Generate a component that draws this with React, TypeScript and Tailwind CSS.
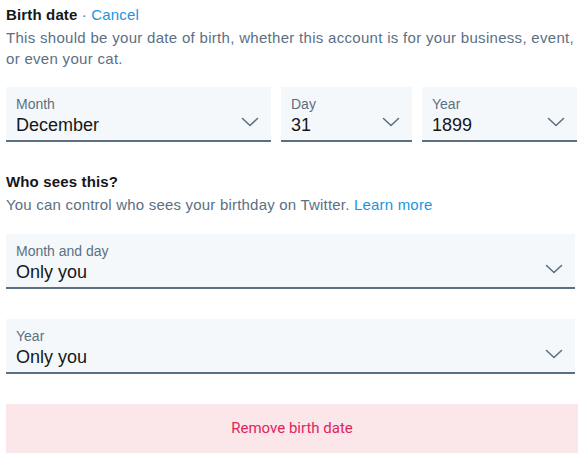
import { ReactNode } from 'react';

function Chevron() {
  return (
    <svg width="18" height="10" viewBox="0 0 18 10" fill="none" className="shrink-0">
      <path d="M1.5 1.5 L9 8.5 L16.5 1.5" stroke="#5b7083" strokeWidth="1.6" strokeLinecap="round" strokeLinejoin="round" />
    </svg>
  );
}

function SelectField({ label, value }: { label: string; value: string }) {
  return (
    <div className="h-[55px] bg-[#f5f8fa] border-b-2 border-[#5b7083] pl-[10px] pr-[12px] pt-[8px] flex items-end justify-between">
      <div className="flex flex-col h-full">
        <span className="text-[14px] leading-[18px] text-[#5b7083]">{label}</span>
        <span className="text-[18px] leading-[24px] text-[#14171a]">{value}</span>
      </div>
      <div className="pb-[13px]">
        <Chevron />
      </div>
    </div>
  );
}

function Section({ children }: { children: ReactNode }) {
  return <div className="flex flex-col">{children}</div>;
}

export default function App() {
  return (
    <div className="w-[580px] h-[468px] bg-white font-['Liberation_Sans',Arial,sans-serif] text-[#14171a]">
      <div className="ml-[6px] w-[571px] pt-[5px]">
        <Section>
          <div className="text-[15px] leading-[20px] tracking-[0.15px]">
            <span className="font-bold">Birth date</span>
            <span className="text-[#5b7083]"> · </span>
            <span className="text-[#1b95e0]">Cancel</span>
          </div>
          <p className="mt-[2px] text-[15px] leading-[21px] tracking-[0.3px] text-[#5b7083]">
            This should be your date of birth, whether this account is for your business, event, or even your cat.
          </p>
        </Section>

        <div className="mt-[18px] grid grid-cols-[265px_131px_155px] gap-x-[10px]">
          <SelectField label="Month" value="December" />
          <SelectField label="Day" value="31" />
          <SelectField label="Year" value="1899" />
        </div>

        <Section>
          <div className="mt-[30px] text-[15px] leading-[20px] font-bold tracking-[0.15px]">Who sees this?</div>
          <p className="mt-[3px] text-[15px] leading-[20px] tracking-[0.2px] text-[#5b7083]">
            You can control who sees your birthday on Twitter. <span className="text-[#1b95e0]">Learn more</span>
          </p>
        </Section>

        <div className="mt-[19px] w-[569px] flex flex-col gap-[30px]">
          <SelectField label="Month and day" value="Only you" />
          <SelectField label="Year" value="Only you" />
        </div>

        <button className="mt-[30px] w-[572px] h-[49px] bg-[#fbe6ea] text-[#e0245e] text-[15px] font-['Roboto',sans-serif] flex items-center justify-center">
          Remove birth date
        </button>
      </div>
    </div>
  );
}
